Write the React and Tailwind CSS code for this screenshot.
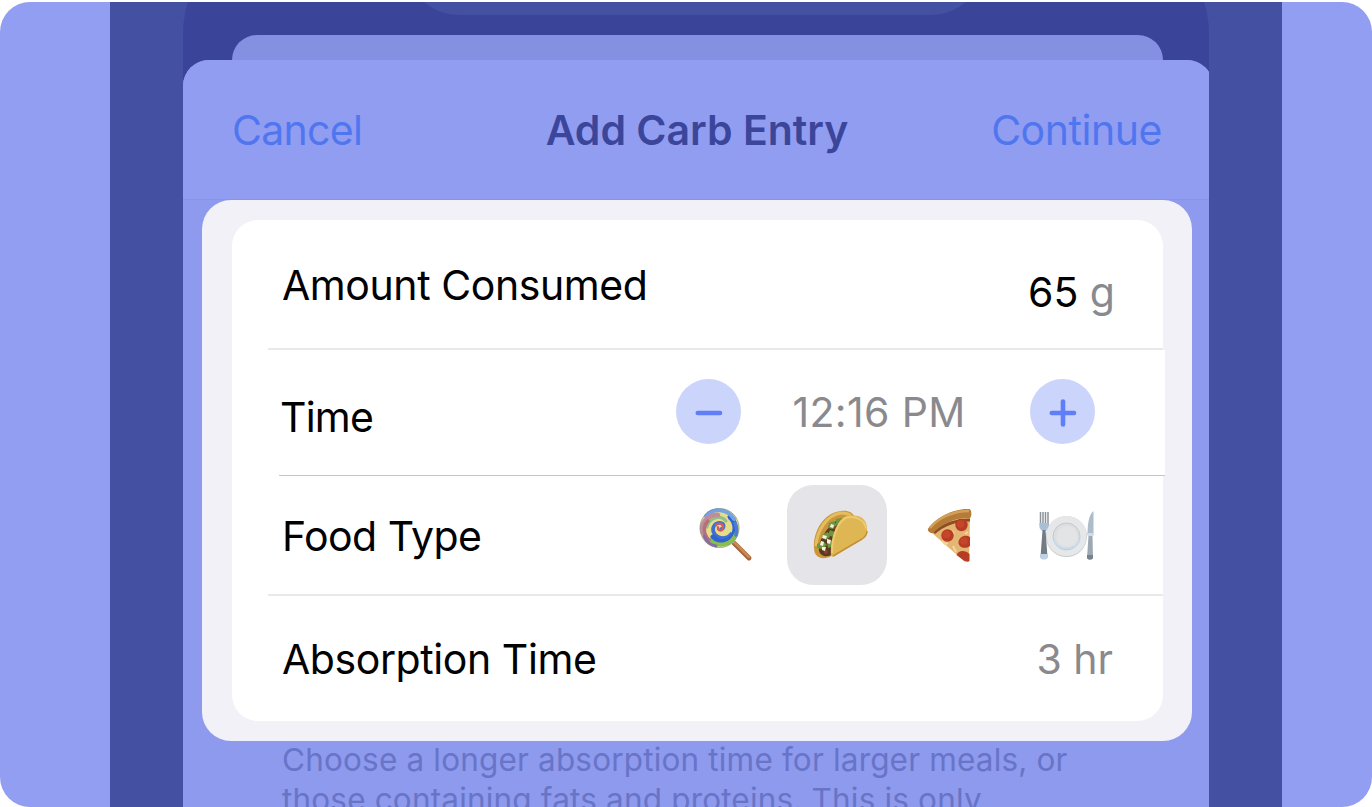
function Lollipop() {
  return (
    <svg className="h-[56px] w-[56px]" viewBox="0 0 56 56" fill="none">
      <path d="M32 33 50 51" stroke="#a0633a" strokeWidth="4.800" strokeLinecap="round" />
      <path d="M32 32 50 50" stroke="#cb8852" strokeWidth="2.600" strokeLinecap="round" />
      <circle cx="20.500" cy="21" r="20" fill="#e6de86" />
      <g strokeLinecap="round">
        <path d="M22 22c3 0 4-5 0-6-6-1-10 5-7 10 4 7 13 6 17 1" stroke="#3f6fd6" strokeWidth="3.600" />
        <path d="M31 10c7 6 7 18-2 23-6 3-12 1-15-3" stroke="#2f62d2" strokeWidth="5" />
        <path d="M11 33c8 8 22 5 26-6" stroke="#86c04c" strokeWidth="4" />
        <path d="M36 16c2 4 2 8 1 12" stroke="#4b7bd8" strokeWidth="3.500" />
        <path d="M27 14c-6-7-17-3-19 6" stroke="#8fc08a" strokeWidth="3" />
        <path d="M35 12C28 1 14 1 7 9" stroke="#74a3e4" strokeWidth="4" />
        <path d="M4 26C1 15 10 7 19 8" stroke="#c58a98" strokeWidth="4.500" />
        <path d="M10 33C3 26 5 18 9 14" stroke="#b5707b" strokeWidth="3.500" />
        <path d="M5 29c2 5 6 9 12 10" stroke="#8a6aa8" strokeWidth="3" />
        <path d="M19 20c-1 4 4 5 5 1 1-4-4-6-7-3" stroke="#d45a62" strokeWidth="2.200" />
      </g>
      <circle cx="20.500" cy="21" r="19.500" stroke="#6680ac" strokeOpacity=".5" />
    </svg>
  );
}

function Taco() {
  return (
    <svg className="ml-[8px] h-[50px] w-[56px]" viewBox="0 0 56 50" fill="none">
      <path d="M1 38C0 20 12 2 28 1c7-1 12 2 13 5L17 47C8 50 1 47 1 38Z" fill="#c9963a" />
      <path d="M3 36C4 20 14 5 28 3c4 0 8 1 10 3" stroke="#e4bd61" strokeWidth="3" />
      <path d="M6 41c-1-12 10-27 21-32l6 2-14 34c-5 2-11 2-13-4Z" fill="#5b3920" />
      <g fill="#6c963f">
        <path d="m16 13 5-2 3 4-4 4-5-1zM23 9l6-1-1 6-5 1zM10 24l5-2 2 5-4 3-4-2zM4 34l6-3 4 4-5 4-5-1zM14 32l6-2-1 7-4 1zM17 20l5 2-2 5-5-2z" />
      </g>
      <g fill="#8f3f2a">
        <circle cx="23" cy="18" r="2" /><circle cx="13" cy="42" r="2" />
      </g>
      <g fill="#f5f2df">
        <path d="m10 25 4 1-1 3-4-1zM8 31l3 1-1 4-3-1zM14 29l4 1-1 4-3-1zM9 37l4 0-1 4-3-1zM18 14l3 1-1 3-3-1z" />
      </g>
      <path d="M18 46C17 28 24 11 32 6.500c3-2 8-1.500 13-.500 6 1.500 9.500 7 9 14 0 4-2 7-6 9L22 46c-2 1-3 1-4 0Z" fill="#dfb654" />
      <path d="M19 43C19 25 26 10 34 7.500c9-2 18 3 19 11" stroke="#ecca70" strokeWidth="2" />
      <path d="m20 46 29-17c3-2 5-5 5-8" stroke="#c38f32" strokeWidth="1.500" />
    </svg>
  );
}

function Pizza() {
  return (
    <svg className="h-[55px] w-[46px]" viewBox="0 0 46 55" fill="none">
      <path d="M5 22C15 11 30 7 43 8l-1 45c-1 2-3 1-5 0L5 25Z" fill="#e4b674" />
      <path d="M7 25C17 16 30 12 43 12" stroke="#8f4d22" strokeWidth="3" />
      <path d="M1 21C8 10 27 0 42 1c3 0 3 8 1 9C29 9 16 15 6 25c-2 1-6-2-5-4Z" fill="#b67b37" />
      <path d="M3 20C12 9 27 3 42 3" stroke="#d2a05a" strokeWidth="2.500" />
      <path d="m15 33 3 3 3-1m4-12 2 3m-1 12 3 6m9-18 3-2" stroke="#f3d79c" strokeWidth="2" />
      <g fill="#b63c24">
        <circle cx="34.500" cy="17" r="6.200" />
        <circle cx="20.500" cy="27.500" r="6.200" />
        <path d="M43 29c-5-3-11 0-11.500 5S38 42 43 38ZM29.500 47c2-5 9-5 13-1v7c-1 1-3 0-5 0Z" />
      </g>
      <g fill="#d65335" opacity=".45">
        <circle cx="33.500" cy="16" r="3.800" /><circle cx="19.500" cy="26.500" r="3.800" /><circle cx="37" cy="33" r="3.800" />
      </g>
    </svg>
  );
}

function Plate() {
  return (
    <svg className="h-[49px] w-[56px]" viewBox="0 0 56 49" fill="none">
      <circle cx="27.500" cy="25.500" r="20.500" fill="#c9cccf" />
      <circle cx="27.500" cy="25" r="20" fill="#e6e7e9" />
      <circle cx="27.500" cy="25.500" r="13.500" fill="#dcdee0" stroke="#c5c9ce" />
      <path d="M15 29c2 11 23 12 26-1" stroke="#c4daf2" strokeWidth="1.500" />
      <circle cx="28" cy="25.500" r="10.500" fill="#e3e4e5" />
      <path d="M1.500 1v14M4 1v14M6.500 1v14M9 1v14" stroke="#8b939b" strokeWidth="1.500" />
      <path d="M.5 12h9v4L7 20H3L.5 17Z" fill="#a9bfd6" />
      <path d="M3.500 19h3l2 27c0 2-7 2-7 0Z" fill="#737b84" />
      <path d="M1.300 43h7.200v4c-1 2-6 2-7.200 0Z" fill="#bdd1e7" />
      <path d="M54.500 1v23h-6C48.500 14 49.500 4 54.500 0Z" fill="#adbcc9" />
      <path d="M48.500 22h6v3h-6Z" fill="#c7def2" />
      <path d="M49.500 25h4l.5 22c-1 2-5 2-6 0Z" fill="#9da8b3" />
      <path d="M48 44h6v3c-1 2-5 2-6 0Z" fill="#76828e" />
    </svg>
  );
}

function StepButton({ plus }) {
  return (
    <button className="flex size-[65px] items-center justify-center rounded-full bg-[#cbd4fb]">
      <svg className="mt-[2px] size-[30px]" viewBox="0 0 30 30" stroke="#5f7ef8" strokeWidth="4.600" strokeLinecap="round">
        <path d="M3.800 15h22.200" />
        {plus && <path d="M15 3.500v23" />}
      </svg>
    </button>
  );
}

export default function App() {
  return (
    <div className="h-[807px] w-[1372px] overflow-hidden bg-white pt-[2px] font-['Inter',sans-serif] text-[41px] leading-[50px] whitespace-nowrap text-black">
      <div className="flex h-[805px] justify-start overflow-hidden rounded-[30px] bg-[#929ef2] pl-[110px]">
        <div className="relative w-[1172px] bg-[#4450a1] pl-[73px]">
          <div className="-mt-[83px] h-[888px] w-[1026px] overflow-hidden rounded-t-[116px] bg-[#3a4599] pt-[116px]">
            <div className="ml-[49px] h-[25px] w-[931px] rounded-t-[26px] bg-[#8490e1]" />
            <div className="h-[747px] w-[1030px] rounded-t-[26px] bg-[#8e9aed]">
              <header className="flex h-[140px] w-[1030px] items-center rounded-t-[26px] border-b border-[#8793e8] bg-[#919df0] pt-[1px] pr-[51px] pl-[49px]">
                <span className="flex-1 tracking-[-0.7px] text-[#5076ef]">Cancel</span>
                <span className="font-semibold text-[#3b469b]">Add Carb Entry</span>
                <span className="flex-1 text-right tracking-[-0.45px] text-[#5076ef]">Continue</span>
              </header>
              <main className="ml-[19px] h-[541px] w-[990px] rounded-[29px] bg-[#f2f1f7] px-[30px] py-[20px]">
                <div className="h-[501px] w-[931px] rounded-[26px] bg-white">
                  <div className="flex h-[128px] justify-between pt-[40px] pr-[48px] pl-[50px]">
                    <span className="tracking-[-0.42px]">Amount Consumed</span>
                    <span className="pt-[7px]">65 <span className="text-[#8a8a8e]">g</span></span>
                  </div>
                  <div className="ml-[36px] h-[2px] bg-[#e9e9ea]" />
                  <div className="flex h-[125px] w-[933px] bg-white pt-[29px] pl-[48px]">
                    <span className="w-[396px] pt-[13px] tracking-[-0.8px]">Time</span>
                    <StepButton />
                    <span className="w-[289px] pt-[8px] pr-[13px] text-center tracking-[0.35px] text-[#8a8a8e]">12:16 PM</span>
                    <StepButton plus />
                  </div>
                  <div className="ml-[47px] h-px w-[886px] bg-[#c6c6c8]" />
                  <div className="flex h-[118px] items-center pl-[50px]">
                    <span className="w-[417px] pt-[1px] tracking-[-0.55px]">Food Type</span>
                    <Lollipop />
                    <div className="ml-[32px] flex size-[100px] items-center justify-center rounded-[26px] bg-[#e5e4e9]"><Taco /></div>
                    <div className="ml-[40px]"><Pizza /></div>
                    <div className="ml-[66px]"><Plate /></div>
                  </div>
                  <div className="ml-[36px] h-[2px] bg-[#e9e9ea]" />
                  <div className="flex justify-between pt-[38px] pr-[50px] pl-[50px]">
                    <span className="tracking-[-0.42px]">Absorption Time</span>
                    <span className="text-[#8a8a8e]">3 hr</span>
                  </div>
                </div>
              </main>
              <p className="-mt-[1px] pl-[99px] text-[31.500px] leading-[40px] tracking-[0.17px] text-[#6874c7]">
                Choose a longer absorption time for larger meals, or<br />those containing fats and proteins. This is only
              </p>
            </div>
          </div>
          <div className="absolute top-0 left-[293px] h-[13px] w-[584px] overflow-hidden">
            <div className="-mt-[57px] h-[70px] w-[584px] rounded-b-[57px] bg-[#4450a1]" />
          </div>
        </div>
      </div>
    </div>
  );
}
